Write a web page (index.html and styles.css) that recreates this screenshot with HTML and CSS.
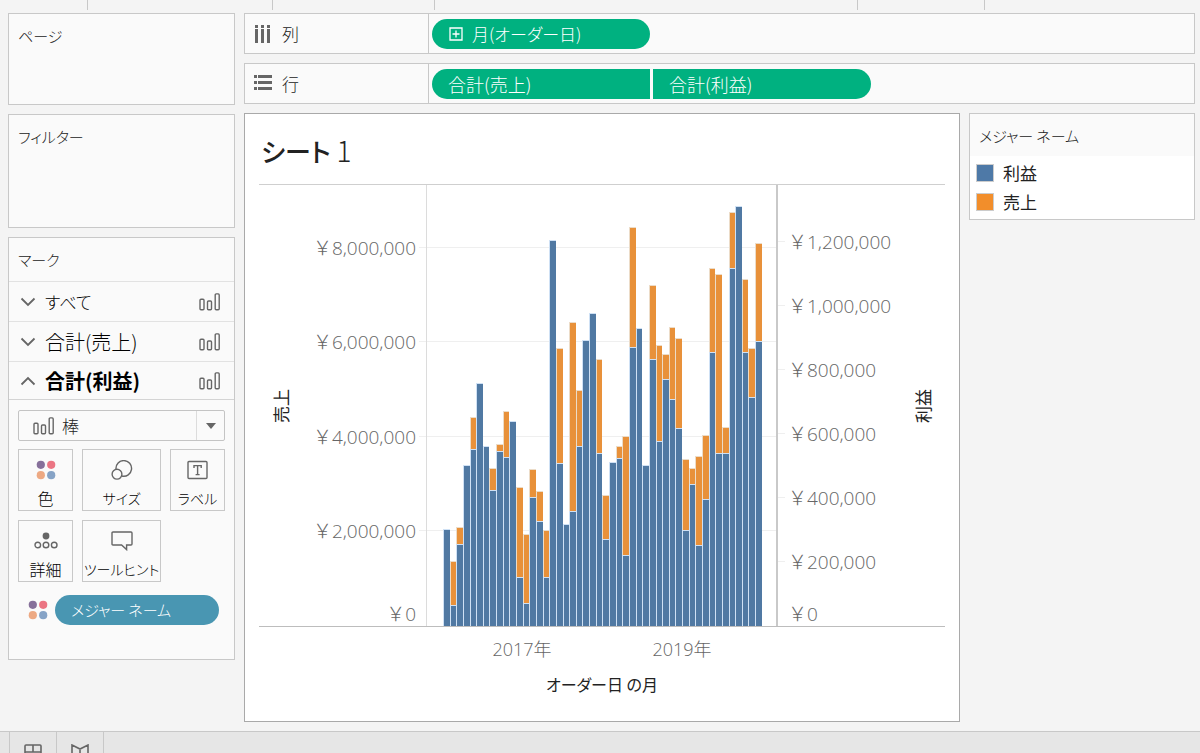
FILE: index.html
```html
<!DOCTYPE html>
<html lang="ja">
<head>
  <meta charset="UTF-8">
  <meta name="viewport" content="width=device-width, initial-scale=1.0">
  <title>シート 1</title>
  <link rel="stylesheet" href="styles.css">
</head>
<body>

<!-- shared icons -->
<svg class="defs" aria-hidden="true">
  <symbol id="icon-bars" viewBox="0 0 22 18">
    <g fill="none" stroke="#666" stroke-width="1.4">
      <rect x="1" y="6.3" width="4" height="10.5" rx="1"/>
      <rect x="8.5" y="8" width="4" height="8.8" rx="1"/>
      <rect x="16.2" y="0.9" width="4" height="15.9" rx="1"/>
    </g>
  </symbol>
  <symbol id="icon-down" viewBox="0 0 16 10">
    <path d="M1.5 1.5 L8 8 L14.5 1.5" fill="none" stroke="#666" stroke-width="1.8"/>
  </symbol>
  <symbol id="icon-color" viewBox="0 0 20 20">
    <circle cx="4.8" cy="4.8" r="4.1" fill="#86709a"/>
    <circle cx="15.2" cy="4.8" r="4.1" fill="#eb7583"/>
    <circle cx="4.8" cy="15.2" r="4.1" fill="#eda983"/>
    <circle cx="15.2" cy="15.2" r="4.1" fill="#86a3c6"/>
  </symbol>
</svg>

<div class="toolbar">
  <span></span><span></span><span></span><span></span><span></span><span></span>
</div>

<div class="workspace">
  <aside class="sidebar">
    <section class="card pages">
      <h2>ページ</h2>
    </section>
    <section class="card filters">
      <h2>フィルター</h2>
    </section>
    <section class="card marks">
      <h2>マーク</h2>
      <button class="mark-row">
        <svg class="chevron"><use href="#icon-down"/></svg>
        <span class="kana">すべて</span>
        <svg class="bars-icon"><use href="#icon-bars"/></svg>
      </button>
      <button class="mark-row">
        <svg class="chevron"><use href="#icon-down"/></svg>
        <span>合計(売上)</span>
        <svg class="bars-icon"><use href="#icon-bars"/></svg>
      </button>
      <button class="mark-row active">
        <svg class="chevron"><use href="#icon-down"/></svg>
        <span>合計(利益)</span>
        <svg class="bars-icon"><use href="#icon-bars"/></svg>
      </button>
      <div class="mark-body">
        <div class="mark-type">
          <svg class="bars-icon"><use href="#icon-bars"/></svg>
          <select aria-label="マークの種類"><option>棒</option></select>
          <span class="arrow"></span>
        </div>
        <div class="mark-cells">
          <button>
            <svg width="20" height="20"><use href="#icon-color"/></svg>
            <span>色</span>
          </button>
          <button>
            <svg width="22" height="20" viewBox="0 0 22 20" fill="none" stroke="#666" stroke-width="1.4">
              <path d="M5 9 A7.8 7.8 0 1 1 11 16"/>
              <circle cx="6" cy="14.2" r="4.9"/>
            </svg>
            <span class="kana">サイズ</span>
          </button>
          <button>
            <svg width="22" height="20" viewBox="0 0 22 20" fill="none" stroke="#666" stroke-width="1.4">
              <rect x="1" y="1.5" width="19" height="17" rx="1"/>
              <path d="M7 8 V5.6 H14.2 V8 M10.6 5.6 V14.6 M8.6 14.6 H12.6"/>
            </svg>
            <span class="kana">ラベル</span>
          </button>
          <button>
            <svg width="24" height="20" viewBox="0 0 24 20" fill="none" stroke="#666" stroke-width="1.4">
              <circle cx="12" cy="5" r="3.4" fill="#666" stroke="none"/>
              <circle cx="3.8" cy="14" r="2.8"/>
              <circle cx="12" cy="14" r="2.8"/>
              <circle cx="20.2" cy="14" r="2.8"/>
            </svg>
            <span>詳細</span>
          </button>
          <button>
            <svg width="22" height="20" viewBox="0 0 22 20" fill="none" stroke="#666" stroke-width="1.4">
              <path d="M2 1 H20 Q21 1 21 2 V13 Q21 14 20 14 H15.6 V18.6 L10.6 14 H2 Q1 14 1 13 V2 Q1 1 2 1 Z"/>
            </svg>
            <span class="kana">ツールヒント</span>
          </button>
        </div>
        <div class="mark-field">
          <svg width="20" height="20"><use href="#icon-color"/></svg>
          <button class="pill blue">メジャー ネーム</button>
        </div>
      </div>
    </section>
  </aside>

  <main class="content">
    <div class="card shelf">
      <div class="shelf-label">
        <svg width="18" height="18" viewBox="0 0 18 18" fill="#666">
          <path d="M1 0h3v3H1z M7 0h3v3H7z M13 0h3v3h-3z M1 4h3v14H1z M7 4h3v14H7z M13 4h3v14h-3z"/>
        </svg>
        <span>列</span>
      </div>
      <div class="shelf-pills">
        <button class="pill green">
          <svg width="16" height="14" viewBox="0 0 16 14" fill="none" stroke="#fff" stroke-width="1.3">
            <path d="M2 1h12v12H2z M8 3.5v7 M4.5 7h7"/>
          </svg>
          月(オーダー日)
        </button>
      </div>
    </div>
    <div class="card shelf">
      <div class="shelf-label">
        <svg width="18" height="18" viewBox="0 0 18 18" fill="#666">
          <path d="M0 0h3v3H0z M0 6h3v3H0z M0 12h3v3H0z M4 0h14v3H4z M4 6h14v3H4z M4 12h14v3H4z"/>
        </svg>
        <span>行</span>
      </div>
      <div class="shelf-pills">
        <button class="pill green first">合計(売上)</button>
        <button class="pill green last">合計(利益)</button>
      </div>
    </div>

    <div class="view">
      <section class="sheet">
        <h1>シート <span>1</span></h1>
        <div class="chart">
          <div class="axis left">
            <div class="axis-title">売上</div>
            <div class="ticks">
              <span>￥8,000,000</span>
              <span>￥6,000,000</span>
              <span>￥4,000,000</span>
              <span>￥2,000,000</span>
              <span>￥0</span>
            </div>
            <div class="gridlines"><i></i><i></i><i></i><i></i><i></i></div>
          </div>
          <div class="plot">
            <div class="gridlines"><i></i><i></i><i></i><i></i><i></i></div>
            <div class="bars" id="bars"></div>
          </div>
          <div class="axis right">
            <div class="gridlines"><i></i><i></i><i></i><i></i><i></i><i></i><i></i></div>
            <div class="ticks">
              <span>￥1,200,000</span>
              <span>￥1,000,000</span>
              <span>￥800,000</span>
              <span>￥600,000</span>
              <span>￥400,000</span>
              <span>￥200,000</span>
              <span>￥0</span>
            </div>
            <div class="axis-title">利益</div>
          </div>
        </div>
        <div class="x-axis">
          <div class="years"><span>2017年</span><span>2019年</span></div>
          <div class="x-title">オーダー日 の月</div>
        </div>
      </section>

      <section class="card legend">
        <h2>メジャー ネーム</h2>
        <ul>
          <li><i class="swatch profit"></i>利益</li>
          <li><i class="swatch sales"></i>売上</li>
        </ul>
      </section>
    </div>
  </main>
</div>

<footer class="tabs">
  <button aria-label="新しいダッシュボード">
    <svg width="18" height="16" viewBox="0 0 18 16" fill="none" stroke="#666" stroke-width="1.6">
      <rect x="1" y="1" width="16" height="14" rx="1"/>
      <path d="M9 1 V8 M1 8 H17"/>
    </svg>
  </button>
  <button aria-label="新しいストーリー">
    <svg width="18" height="16" viewBox="0 0 18 16" fill="none" stroke="#666" stroke-width="1.6">
      <path d="M1 1 L9 5 L17 1 V12 L9 15 L1 12 Z M9 5 V15"/>
    </svg>
  </button>
</footer>

<script src="chart.js"></script>
</body>
</html>
```
FILE: styles.css
```css
* {
  box-sizing: border-box;
}
body {
  margin: 0;
  min-height: 100vh;
  display: flex;
  flex-direction: column;
  background-color: #f4f4f4;
  color: #222;
  font-family: "Noto Sans CJK JP", sans-serif;
  font-size: 17px;
  font-weight: 300;
  line-height: 24px;
  font-feature-settings: "palt";
}
button,
select {
  font: inherit;
  font-feature-settings: inherit;
  color: inherit;
  border: none;
  padding: 0;
  background: none;
  cursor: pointer;
}
h1,
h2,
ul {
  margin: 0;
  padding: 0;
  font-weight: 300;
  list-style: none;
}
h2 {
  font-size: 15px;
}
.defs {
  display: none;
}

/* top strip */
.toolbar {
  display: grid;
  grid-template-columns: 88px 185px 162px 1fr 127px 215px;
  height: 10px;
  margin-bottom: 3px;
}
.toolbar span {
  border-right: 1px solid #c8c8c8;
}
.toolbar span:last-child {
  border: none;
}

/* layout */
.workspace {
  flex: 1;
  display: grid;
  grid-template-columns: 227px 1fr;
  gap: 9px;
  padding: 0 5px 9px 8px;
}
.sidebar,
.content {
  display: flex;
  flex-direction: column;
  gap: 9px;
}
.card {
  border: 1px solid #c8c8c8;
  background-color: #fafafa;
}
.sidebar h2 {
  padding: 10px 9px 9px;
}
.pages {
  min-height: 92px;
}
.filters {
  min-height: 114px;
}

/* marks */
.mark-row {
  display: flex;
  align-items: center;
  width: 100%;
  height: 40px;
  padding: 0 13px 0 11px;
  border-top: 1px solid #e2e2e2;
  color: #000;
  font-size: 20px;
  text-align: left;
}
.mark-row .kana {
  font-size: 17px;
}
.mark-row span {
  flex: 1;
  padding-left: 9px;
}
.mark-row.active {
  height: 39px;
  border-bottom: 1px solid #d4d4d4;
  font-weight: 700;
}
.mark-row.active .chevron {
  transform: rotate(180deg);
}
.chevron {
  width: 16px;
  height: 10px;
}
.bars-icon {
  width: 22px;
  height: 18px;
}
.mark-body {
  padding: 10px 9px 34px;
}
.mark-type {
  display: grid;
  grid-template-columns: 14px 22px 1fr 28px;
  align-items: center;
  height: 31px;
  border: 1px solid #c4c4c4;
  border-radius: 2px;
}
.mark-type .bars-icon {
  grid-area: 1 / 2;
}
.mark-type select {
  grid-area: 1 / 1 / 2 / 5;
  appearance: none;
  height: 29px;
  padding-left: 43px;
}
.arrow {
  grid-area: 1 / 4;
  height: 29px;
  border-left: 1px solid #dcdcdc;
  display: flex;
  align-items: center;
  justify-content: center;
  pointer-events: none;
}
.arrow::after {
  content: "";
  border: 5px solid transparent;
  border-top: 6px solid #666;
  border-bottom: none;
}
.mark-cells {
  display: grid;
  grid-template-columns: 55px minmax(0, 1fr) 55px;
  gap: 9px;
  padding: 8px 0 13px;
}
.mark-cells button {
  display: flex;
  flex-direction: column;
  align-items: center;
  gap: 6px;
  height: 62px;
  padding-top: 10px;
  border: 1px solid #c8c8c8;
  color: #000;
  font-size: 16px;
  white-space: nowrap;
}
.mark-cells .kana {
  font-size: 14px;
}
.mark-field {
  display: flex;
  align-items: center;
  gap: 7px;
  padding: 0 6px 0 10px;
}

/* pills */
.pill {
  display: flex;
  align-items: center;
  gap: 8px;
  width: 218px;
  height: 30px;
  padding-left: 16px;
  border-radius: 15px;
  color: #fff;
}
.pill.green {
  background-color: #00b180;
}
.pill.blue {
  flex: 1;
  background-color: #4996b2;
  font-size: 15px;
}
.pill.first,
.pill.last {
  font-size: 18px;
}
.pill.first {
  border-radius: 15px 0 0 15px;
}
.pill.last {
  border-radius: 0 15px 15px 0;
}

/* shelves */
.shelf {
  display: flex;
  height: 41px;
}
.shelf-label {
  display: flex;
  align-items: center;
  gap: 10px;
  width: 184px;
  padding-left: 9px;
  border-right: 1px solid #c8c8c8;
}
.shelf-pills {
  flex: 1;
  display: flex;
  align-items: center;
  gap: 3px;
  padding-left: 3px;
}

/* sheet */
.view {
  flex: 1;
  display: grid;
  grid-template-columns: 1fr 226px;
  gap: 9px;
  align-items: start;
}
.sheet {
  align-self: stretch;
  display: flex;
  flex-direction: column;
  padding: 0 14px;
  border: 1px solid #a9a9a9;
  background-color: #fff;
}
.sheet h1 {
  padding: 16px 2px 13px;
  font-size: 26px;
  font-weight: 500;
  line-height: 40px;
}
.sheet h1 span {
  font-size: 28px;
  font-weight: 300;
}
.chart {
  flex: 1;
  display: grid;
  grid-template-columns: 167px 1fr 167px;
  border-top: 1px solid #cfcfcf;
  border-bottom: 1px solid #bdbdbd;
}
.axis {
  display: flex;
  align-items: center;
}
.axis-title {
  margin: 0 10px;
  writing-mode: vertical-rl;
  text-orientation: sideways;
  transform: rotate(180deg);
  font-weight: 400;
}
.left .ticks,
.right .axis-title {
  margin-left: auto;
}
.ticks {
  display: grid;
  height: 100%;
  padding: 0 3px;
  color: #666;
  font-family: "Open Sans", "Noto Sans CJK JP", sans-serif;
  font-size: 19px;
  font-feature-settings: normal;
}
.left .ticks {
  text-align: right;
}
.ticks span {
  align-self: end;
  margin-bottom: -12px;
}
.ticks span:last-child {
  margin-bottom: 0;
}
.left .ticks,
.gridlines {
  grid-template-rows: 63fr repeat(4, 95fr);
}
.right .ticks,
.right .gridlines {
  grid-template-rows: 57fr repeat(6, 64fr);
}
.plot {
  display: grid;
  border-left: 1px solid #dcdcdc;
  border-right: 2px solid #c9c9c9;
}
.plot .gridlines,
.bars {
  grid-area: 1 / 1;
}
.gridlines {
  display: grid;
}
.axis .gridlines {
  width: 7px;
  height: 100%;
}
.gridlines i {
  border-bottom: 1px solid #efefef;
}
.gridlines i:last-child {
  border: none;
}
.bars {
  display: flex;
  padding: 0 14px 0 16px;
}
.month {
  flex: 1;
  display: grid;
}
.bar {
  grid-area: 1 / 1;
  align-self: end;
  border-top: 1px solid;
  border-left: 1px solid;
}
.bar.sales {
  background-color: #e8913a;
  border-color: #ecdcc8;
}
.bar.profit {
  background-color: #5079a3;
  border-color: #cfe1f5;
}
.x-axis {
  height: 94px;
  padding: 10px 183px 0;
  text-align: center;
}
.years {
  display: grid;
  grid-template-columns: 1fr 1fr;
  color: #666;
  font-family: "Open Sans", "Noto Sans CJK JP", sans-serif;
  font-size: 18px;
}
.x-title {
  margin-top: 11px;
  font-size: 16px;
  font-weight: 400;
}

/* legend */
.legend {
  background-color: #fff;
}
.legend h2 {
  padding: 10px 9px 8px;
  background-color: #fafafa;
}
.legend ul {
  padding: 2px 6px 3px;
}
.legend li {
  display: flex;
  align-items: center;
  gap: 9px;
  height: 29px;
  font-weight: 400;
}
.swatch {
  width: 18px;
  height: 18px;
  border: 1px solid #ccc;
}
.swatch.profit {
  background-color: #4e79a7;
}
.swatch.sales {
  background-color: #f28e2b;
}

/* sheet tabs */
.tabs {
  display: flex;
  height: 22px;
  padding-left: 9px;
  overflow: hidden;
  border-top: 1px solid #c8c8c8;
  background-color: #e6e6e6;
}
.tabs button {
  width: 47px;
  height: 40px;
  padding-top: 12px;
  border-left: 1px solid #c8c8c8;
  line-height: 0;
  display: flex;
  justify-content: center;
}
.tabs button:last-child {
  width: 48px;
  border-right: 1px solid #c8c8c8;
}
```
FILE: chart.js
```javascript
// [profit, sales] per month, sales is 0 where it is hidden behind profit
const scale = 442;
const months = [
  [97, 0], [21, 65], [82, 99], [161, 0], [177, 209], [244, 0],
  [180, 0], [136, 158], [175, 182], [169, 216], [205, 0], [49, 139],
  [23, 92], [129, 157], [105, 135], [49, 96], [387, 0], [163, 279],
  [102, 0], [115, 305], [180, 237], [287, 0], [314, 0], [173, 268],
  [87, 131], [164, 0], [168, 180], [71, 190], [280, 400], [299, 0],
  [161, 0], [268, 342], [185, 282], [248, 273], [228, 300], [198, 289],
  [96, 167], [142, 158], [81, 170], [127, 191], [275, 359], [173, 353],
  [173, 199], [359, 415], [421, 0], [275, 348], [230, 279], [286, 384]
];

function addBar(month, name, value) {
  if (!value) return;
  const bar = document.createElement('div');
  bar.className = 'bar ' + name;
  bar.style.height = (value / scale * 100) + '%';
  month.appendChild(bar);
}

const bars = document.getElementById('bars');
months.forEach(([profit, sales]) => {
  const month = document.createElement('div');
  month.className = 'month';
  addBar(month, 'sales', sales);
  addBar(month, 'profit', profit);
  bars.appendChild(month);
});
```
